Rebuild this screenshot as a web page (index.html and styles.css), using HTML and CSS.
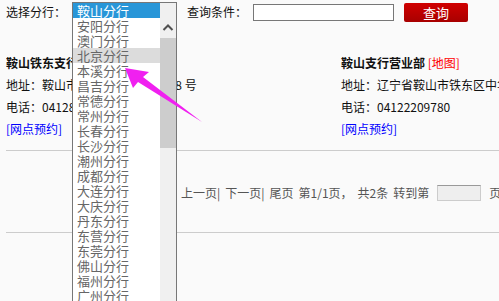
FILE: index.html
```html
<!DOCTYPE html>
<html lang="zh-CN">
<head>
    <meta charset="UTF-8">
    <title>网点查询</title>
    <link rel="stylesheet" href="styles.css">
</head>
<body>
    <div class="search-bar">
        <span class="label">选择分行：</span>
        <select class="branch-select">
            <option>鞍山分行</option>
        </select>
        <span class="label cond-label">查询条件：</span>
        <input type="text" class="cond-input">
        <button class="btn-query">查询</button>
    </div>

    <div class="branch-list">
        <div class="branch">
            <p class="branch-name">鞍山铁东支行营业部 <a href="#" class="map-link">[地图]</a></p>
            <p>地址：鞍山市铁东区胜利南路108 号</p>
            <p>电话：0412853120</p>
            <p><a href="#" class="book-link">[网点预约]</a></p>
        </div>
        <div class="branch">
            <p class="branch-name">鞍山支行营业部 <a href="#" class="map-link">[地图]</a></p>
            <p>地址：辽宁省鞍山市铁东区中华路12号</p>
            <p>电话：04122209780</p>
            <p><a href="#" class="book-link">[网点预约]</a></p>
        </div>
    </div>

    <div class="pager">
        <span>上一页|</span>
        <span>下一页|</span>
        <span>尾页</span>
        <span>第1/1页，</span>
        <span>共2条</span>
        <span>转到第</span>
        <input type="text" class="page-input">
        <span>页</span>
    </div>

    <!-- opened branch list, drawn over the page -->
    <div class="dropdown">
        <ul class="options">
            <li class="selected">鞍山分行</li>
            <li>安阳分行</li>
            <li>澳门分行</li>
            <li class="hover">北京分行</li>
            <li>本溪分行</li>
            <li>昌吉分行</li>
            <li>常德分行</li>
            <li>常州分行</li>
            <li>长春分行</li>
            <li>长沙分行</li>
            <li>潮州分行</li>
            <li>成都分行</li>
            <li>大连分行</li>
            <li>大庆分行</li>
            <li>丹东分行</li>
            <li>东营分行</li>
            <li>东莞分行</li>
            <li>佛山分行</li>
            <li>福州分行</li>
            <li>广州分行</li>
        </ul>
        <div class="scrollbar">
            <svg class="scroll-up" width="16" height="16" viewBox="0 0 16 16">
                <polyline points="3.5,10 8,5.5 12.5,10" fill="none" stroke="#505050" stroke-width="2"/>
            </svg>
            <div class="thumb"></div>
        </div>
    </div>

    <svg class="pointer" width="499" height="301" viewBox="0 0 499 301">
        <polygon points="125,68 149,72 143,77 202,122 138,82 133,88" fill="#f020f0"/>
    </svg>
</body>
</html>
```

FILE: styles.css
```css
body {
    margin: 0;
    background: #fafafa;
    font-family: "Noto Sans CJK SC", "Liberation Sans", sans-serif;
    font-size: 12px;
    color: #111;
    overflow: hidden;
    width: 499px;
    height: 301px;
    position: relative;
}

p {
    margin: 0;
}

a {
    text-decoration: none;
}

.search-bar {
    display: flex;
    align-items: center;
    height: 24px;
    padding-left: 6px;
    white-space: nowrap;
}

.label {
    line-height: 24px;
}

.branch-select {
    width: 104px;
    height: 18px;
    margin-left: 6px;
}

.cond-label {
    margin-left: 11px;
}

.cond-input {
    width: 137px;
    height: 13px;
    margin: 0 0 0 6px;
    padding: 1px;
    border: 1px solid #777;
    background: #fff;
}

.btn-query {
    width: 64px;
    height: 19px;
    margin-left: 10px;
    padding: 0;
    border: none;
    border-radius: 2px;
    background: linear-gradient(#d00000, #a80000);
    color: #fff;
    font-family: inherit;
    font-size: 13px;
    line-height: 19px;
}

.branch-list {
    display: flex;
    margin: 28px 0 0 6px;
    padding-bottom: 10px;
    border-bottom: 1px solid #ccc;
    white-space: nowrap;
    overflow: hidden;
}

.branch {
    width: 335px;
    flex-shrink: 0;
    line-height: 22px;
}

.branch-name {
    font-weight: bold;
}

.map-link {
    color: #f00;
    font-weight: normal;
}

.book-link {
    color: #00f;
}

.pager {
    display: flex;
    align-items: center;
    gap: 5px;
    margin-left: 6px;
    padding: 31px 0 28px 175px;
    height: 22px;
    line-height: 22px;
    border-bottom: 1px solid #ccc;
    color: #555;
    white-space: nowrap;
    overflow: hidden;
}

.page-input {
    width: 40px;
    height: 12px;
    margin: 0 3px;
    padding: 1px;
    border: 1px solid #ccc;
    border-top-color: #999;
    background: #eee;
    flex-shrink: 0;
}

.dropdown {
    position: absolute;
    left: 72px;
    top: 2px;
    width: 103px;
    height: 298px;
    display: flex;
    overflow: hidden;
    background: #fff;
    border: 1px solid #777;
    border-bottom: none;
}

.options {
    list-style: none;
    margin: 0;
    padding: 0;
    flex: 1;
}

.options li {
    height: 15px;
    line-height: 15px;
    padding-left: 4px;
    font-size: 13px;
    color: #666;
}

.options li.selected {
    background: #2896d8;
    color: #fff;
}

.options li.hover {
    background: #dcdcdc;
}

.scrollbar {
    width: 16px;
    background: #f0f0f0;
    padding-top: 17px;
}

.scroll-up {
    display: block;
}

.thumb {
    height: 110px;
    margin-top: 2px;
    background: #cdcdcd;
}

.pointer {
    position: absolute;
    left: 0;
    top: 0;
    pointer-events: none;
}
```
